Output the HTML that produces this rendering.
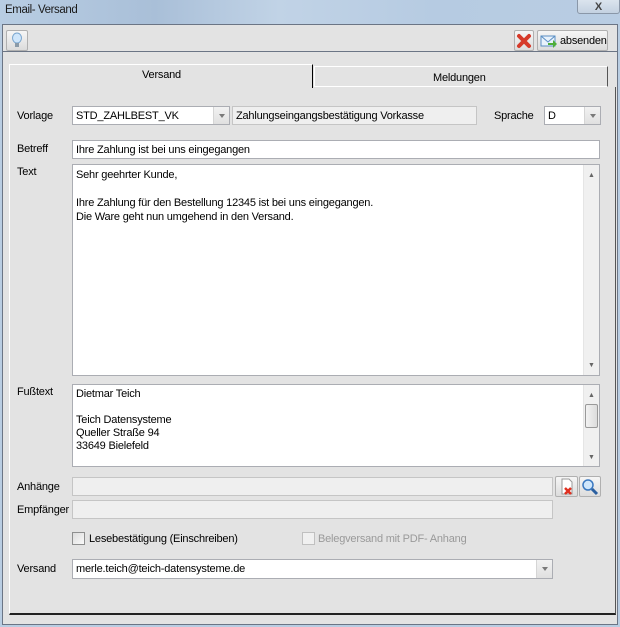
<!DOCTYPE html>
<html><head><meta charset="utf-8"><style>
*{margin:0;padding:0;box-sizing:border-box}
body{width:620px;height:627px;overflow:hidden;background:#b9cde2;font-family:"Liberation Sans",sans-serif;font-size:11px;letter-spacing:-0.2px;color:#000;position:relative}
.a{position:absolute}
.title{left:0;top:0;width:620px;height:25px;background:linear-gradient(90deg,#b8cde3 0%,#a9bfd8 25%,#c1d3e6 45%,#b6cbe2 70%,#b9cde3 100%)}
.win{left:2px;top:24px;width:616px;height:601px;background:#e3e3e3;border:1px solid #6b7585}
.lbl{position:absolute;font-size:11px}
.inp{position:absolute;background:#fff;border:1px solid #abadb3;height:19px;padding:3px 3px 1px;white-space:nowrap}
.dis{background:#efefef;border-color:#c5c5c5}
.dd{position:absolute;right:0;top:0;width:16px;height:17px;background:linear-gradient(#f2f2f2,#e0e0e0);border-left:1px solid #d5d5d5}
.dd:after{content:"";position:absolute;left:5px;top:7px;border:3px solid transparent;border-top:4px solid #7a7a7a;border-bottom:0}
.btn{position:absolute;border:1px solid #b0b0b0;border-radius:2px;background:linear-gradient(#f6f6f6,#dcdcdc)}
.sb{position:absolute;right:0;top:0;bottom:0;width:16px;background:#f0f0f0;border-left:1px solid #e5e5e5}
.cb{position:absolute;width:13px;height:13px;border:1px solid #8e8f8f;background:linear-gradient(135deg,#dcdcdc,#fafafa)}
</style></head><body>
<div class="a title"></div>
<div class="a" style="left:5px;top:4px;font-size:11.5px;letter-spacing:-0.4px;color:#1a1a1a">Email- Versand</div>
<div class="a" style="left:577px;top:-3px;width:43px;height:17px;border:1px solid #8a97a8;border-radius:3px;background:linear-gradient(#dfe7f0,#c3d1e1);text-align:center;font-size:11px;color:#444;line-height:18px;font-weight:bold">X</div>
<div class="a win"></div>
<div class="a" style="left:3px;top:51px;width:614px;height:1px;background:#6b7585"></div>
<div class="btn" style="left:6px;top:30px;width:22px;height:21px"><svg width="20" height="19"><ellipse cx="10" cy="7" rx="4.5" ry="5" fill="#cfe6fb" stroke="#7aa6cf"/><rect x="8" y="12" width="4" height="4" fill="#8a9aa8"/></svg></div>
<div class="btn" style="left:514px;top:30px;width:20px;height:21px"><svg width="18" height="19"><path d="M4 5 L14 15 M14 5 L4 15" stroke="#d63a2a" stroke-width="4" stroke-linecap="round"/></svg></div>
<div class="btn" style="left:537px;top:30px;width:71px;height:21px"><svg class="a" style="left:2px;top:3px" width="18" height="15"><rect x="1" y="2" width="14" height="10" fill="#e8f2fc" stroke="#5b8fc4"/><path d="M1 2 L8 8 L15 2" fill="none" stroke="#5b8fc4"/><path d="M8 9 h5 v-3 l4 4 l-4 4 v-3 h-5z" fill="#4fae3a"/></svg><span class="a" style="left:22px;top:4px">absenden</span></div>
<!-- tabs -->
<div class="a" style="left:9px;top:64px;width:304px;height:24px;background:#e3e3e3;border:1px solid #fff;border-right:1px solid #000;border-bottom:none"></div>
<div class="a" style="left:142px;top:69px">Versand</div>
<div class="a" style="left:314px;top:66px;width:294px;height:21px;background:#e3e3e3;border:1px solid #fff;border-right:1px solid #555;border-bottom:1px solid #fff"></div>
<div class="a" style="left:433px;top:72px">Meldungen</div>
<div class="a" style="left:9px;top:87px;width:607px;height:528px;border-left:1px solid #fff;border-right:1px solid #555;border-bottom:2px solid #222"></div>
<!-- form -->
<div class="lbl" style="left:17px;top:110px">Vorlage</div>
<div class="inp" style="left:72px;top:106px;width:158px">STD_ZAHLBEST_VK<div class="dd"></div></div>
<div class="inp dis" style="left:232px;top:106px;width:245px">Zahlungseingangsbestätigung Vorkasse</div>
<div class="lbl" style="left:494px;top:110px">Sprache</div>
<div class="inp" style="left:544px;top:106px;width:57px">D<div class="dd"></div></div>
<div class="lbl" style="left:17px;top:143px">Betreff</div>
<div class="inp" style="left:72px;top:140px;width:528px">Ihre Zahlung ist bei uns eingegangen</div>
<div class="lbl" style="left:17px;top:166px">Text</div>
<div class="inp" style="left:72px;top:164px;width:528px;height:212px;line-height:14px;padding-top:3px;white-space:pre">Sehr geehrter Kunde,

Ihre Zahlung für den Bestellung 12345 ist bei uns eingegangen.
Die Ware geht nun umgehend in den Versand.<div class="sb"><span class="a" style="left:4px;top:4px;font-size:7px;color:#666">▲</span><span class="a" style="left:4px;bottom:2px;font-size:7px;color:#666">▼</span></div></div>
<div class="lbl" style="left:17px;top:386px">Fußtext</div>
<div class="inp" style="left:72px;top:384px;width:528px;height:83px;line-height:13px;padding-top:3px;white-space:pre">Dietmar Teich

Teich Datensysteme
Queller Straße 94
33649 Bielefeld<div class="sb"><span class="a" style="left:4px;top:4px;font-size:7px;color:#666">▲</span><div class="a" style="left:1px;top:19px;width:13px;height:24px;border:1px solid #999;border-radius:2px;background:linear-gradient(90deg,#f2f2f2,#dcdcdc)"></div><span class="a" style="left:4px;bottom:2px;font-size:7px;color:#666">▼</span></div></div>
<div class="lbl" style="left:17px;top:481px">Anhänge</div>
<div class="inp dis" style="left:72px;top:477px;width:481px"></div>
<div class="btn" style="left:555px;top:476px;width:23px;height:21px"><svg width="21" height="19"><path d="M6 2h7l3 3v12H6z" fill="#fff" stroke="#999"/><path d="M9 11l6 6M15 11l-6 6" stroke="#e03020" stroke-width="2.5"/></svg></div>
<div class="btn" style="left:579px;top:476px;width:22px;height:21px"><svg width="20" height="19"><circle cx="8" cy="8" r="5" fill="#cfe6fb" stroke="#3a78c0" stroke-width="1.5"/><path d="M12 12l5 5" stroke="#2a5fa0" stroke-width="3"/></svg></div>
<div class="lbl" style="left:17px;top:504px">Empfänger</div>
<div class="inp dis" style="left:72px;top:500px;width:481px"></div>
<div class="cb" style="left:72px;top:532px"></div>
<div class="lbl" style="left:89px;top:533px">Lesebestätigung (Einschreiben)</div>
<div class="cb" style="left:302px;top:532px;border-color:#c0c0c0;background:#f0f0f0"></div>
<div class="lbl" style="left:318px;top:533px;color:#9a9a9a">Belegversand mit PDF- Anhang</div>
<div class="lbl" style="left:17px;top:563px">Versand</div>
<div class="inp" style="left:72px;top:559px;width:481px;height:20px">merle.teich@teich-datensysteme.de<div class="dd" style="height:18px"></div></div>
</body></html>
